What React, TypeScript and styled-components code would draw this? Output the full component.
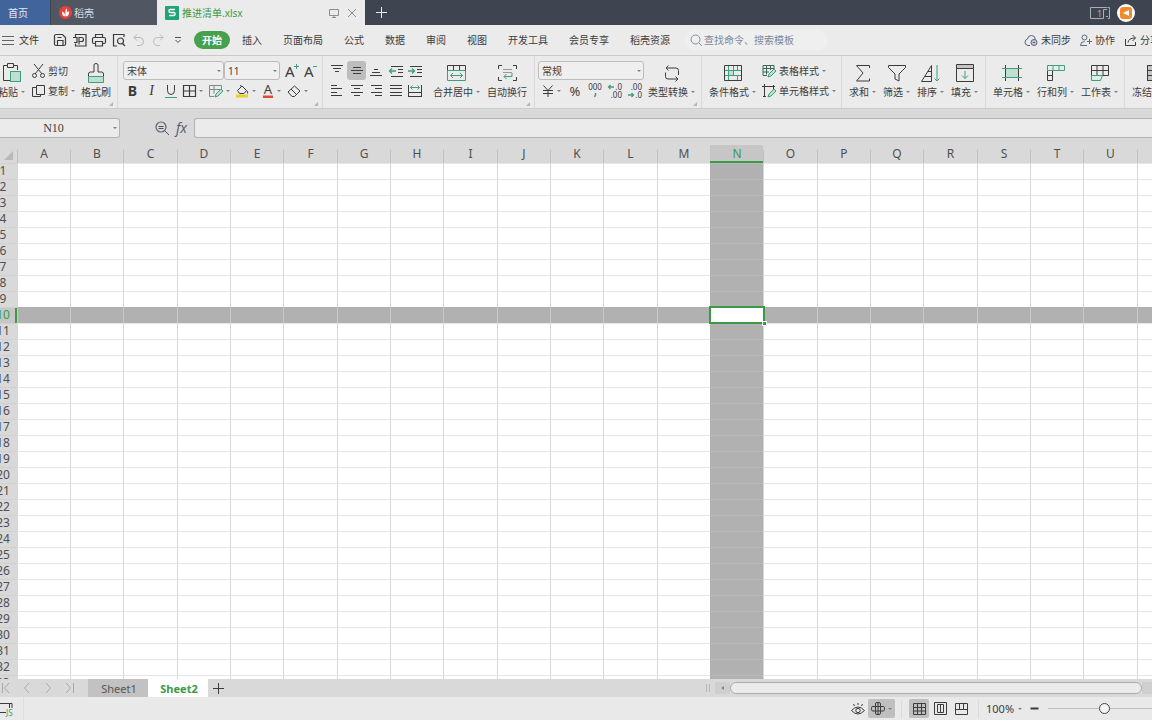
import React from 'react';
import styled, { createGlobalStyle, css } from 'styled-components';

const c = {
  ink: '#3c3c3c',
  green: '#3c9a47',
  teal: '#3f9f7c',
  mint: '#bfe0d1',
  panel: '#ebebeb',
  chrome: '#d9d9d9',
};

const GlobalStyle = createGlobalStyle`
  *, *::before, *::after { box-sizing: border-box; }
  html, body { margin: 0; }
  body, button, input, select {
    font-family: "Noto Sans", "Noto Sans CJK SC", sans-serif;
    font-size: 10px;
    line-height: 14px;
    color: ${c.ink};
  }
  button { border: 0; padding: 0; margin: 0; background: none; white-space: nowrap; }
`;

/* ---------- shared parts ---------- */

const Svg = styled.svg`
  display: block;
  flex: none;
  overflow: visible;
  fill: none;
  stroke: currentColor;
  stroke-width: 1;
  text {
    fill: currentColor;
    stroke: none;
  }
`;

type IcoProps = { w?: number; h?: number; children: React.ReactNode };
const Ico = ({ w = 14, h = 14, children }: IcoProps) => (
  <Svg width={w} height={h} viewBox={`0 0 ${w} ${h}`} aria-hidden="true">
    {children}
  </Svg>
);

const CaretMark = styled.span`
  flex: none;
  border: 2px solid transparent;
  border-top-color: #808080;
  border-bottom-width: 0;
`;

const Page = styled.div`
  display: flex;
  flex-direction: column;
  height: 100vh;
  overflow: hidden;
  background: ${c.chrome};
`;

/* ---------- title bar ---------- */

const TitleBar = styled.header`
  display: flex;
  flex: none;
  height: 25px;
  background: #3e4450;
  color: #e8eaee;
`;

const HomeTab = styled.button`
  width: 50px;
  padding-right: 14px;
  background: #42649c;
  color: #e6ecf5;
`;

const DocerTab = styled.button`
  display: flex;
  align-items: center;
  gap: 2px;
  width: 107px;
  padding-left: 8px;
  background: #515762;
  border-left: 1px solid #3e4450;
  color: #d9dbdf;
`;

const FileTab = styled.div`
  display: flex;
  align-items: center;
  gap: 9px;
  width: 208px;
  padding: 0 9px 0 8px;
  background: ${c.panel};
  color: #8c8c8c;
`;

const FileName = styled.button`
  display: flex;
  align-items: center;
  gap: 3px;
  margin-right: auto;
  color: ${c.green};
`;

const PlainIcon = styled.button`
  display: flex;
  align-items: center;
  justify-content: center;
  color: inherit;
`;

const NewTab = styled(PlainIcon)`
  width: 32px;
`;

const TitleRight = styled.div`
  display: flex;
  align-items: center;
  gap: 7px;
  margin-left: auto;
  padding-right: 17px;
  color: #a9adb6;
`;

/* ---------- menu bar ---------- */

const MenuBar = styled.nav`
  display: flex;
  flex: none;
  align-items: center;
  height: 31px;
  background: ${c.panel};
  border-bottom: 1px solid #c9c9c9;
  overflow: hidden;
`;

const FileMenu = styled.button`
  display: flex;
  align-items: center;
  gap: 5px;
  width: 53px;
  padding-left: 2px;
  color: #333333;
`;

const QuickBar = styled.div`
  display: flex;
  align-items: center;
  justify-content: space-between;
  width: 132px;
  margin-right: 9px;
`;

const StartTab = styled.button`
  height: 18px;
  padding: 0 8px;
  margin-right: 2px;
  border-radius: 9px;
  background: #46a04c;
  color: #ffffff;
  font-weight: 700;
`;

const MenuTabs = styled.div`
  display: flex;
  flex: none;
  gap: 1px;
`;

const MenuTab = styled.button`
  height: 18px;
  padding: 0 10px;
`;

const SearchBox = styled.label`
  display: flex;
  align-items: center;
  gap: 2px;
  width: 144px;
  height: 20px;
  margin-left: 4px;
  padding-left: 6px;
  border-radius: 10px;
  background: #efefef;
  color: #8490a3;
`;

const SearchInput = styled.input`
  width: 110px;
  padding: 0;
  border: 0;
  background: none;
  &::placeholder { color: #7b889d; opacity: 1; }
`;

const MenuRight = styled.div`
  display: flex;
  gap: 9px;
  margin-left: auto;
  margin-right: -8px;
`;

const MenuAction = styled.button`
  display: flex;
  align-items: center;
  gap: 3px;
`;

/* ---------- ribbon ---------- */

const Ribbon = styled.section`
  display: flex;
  flex: none;
  height: 53px;
  background: ${c.panel};
  border-bottom: 1px solid #cdcdcd;
  overflow: hidden;
`;

const Group = styled.div<{ $width: number; $pad: number; $launcher?: boolean }>`
  position: relative;
  display: flex;
  flex: none;
  align-items: flex-start;
  width: ${(p) => p.$width}px;
  padding: 5px 0 0 ${(p) => p.$pad}px;
  border-right: 1px solid #dadada;
  ${(p) =>
    p.$launcher &&
    css`
      &::after {
        content: '';
        position: absolute;
        right: 4px;
        bottom: 2px;
        border: 2px solid #b5b5b5;
        border-top-color: transparent;
        border-left-color: transparent;
      }
    `}
`;

const Stack = styled.div`
  display: flex;
  flex-direction: column;
  gap: 1px;
`;

const Line = styled.div`
  display: flex;
  align-items: center;
  height: 19px;
`;

const Big = styled.button`
  display: flex;
  flex: none;
  flex-direction: column;
  align-items: center;
`;

const BigArt = styled.span`
  display: flex;
  align-items: center;
  justify-content: center;
  height: 24px;
`;

const Caption = styled.span`
  display: flex;
  align-items: center;
  gap: 3px;
`;

const BigRow = styled.div`
  display: flex;
  gap: 7px;
`;

/* The paste button is partly scrolled off the left edge of the ribbon. */
const PasteSlot = styled.div`
  flex: none;
  width: 34px;
  margin-left: -2px;
  ${Big} { width: 27px; }
`;

const Small = styled.button`
  display: flex;
  align-items: center;
  gap: 3px;
`;

const Tool = styled.button<{ $width: number; $on?: boolean }>`
  display: flex;
  align-items: center;
  justify-content: center;
  gap: 3px;
  width: ${(p) => p.$width}px;
  height: 19px;
  border-radius: 3px;
  background: ${(p) => (p.$on ? '#bdbdbd' : 'none')};
`;

const Letter = styled.span<{ $kind?: 'bold' | 'italic' }>`
  font-size: 14px;
  font-weight: ${(p) => (p.$kind === 'bold' ? 700 : 400)};
  font-style: ${(p) => (p.$kind === 'italic' ? 'italic' : 'normal')};
  font-family: ${(p) => (p.$kind === 'italic' ? '"Liberation Serif", serif' : 'inherit')};
`;

const SelectWrap = styled.span<{ $width: number }>`
  position: relative;
  display: block;
  width: ${(p) => p.$width}px;
  height: 19px;
  ${CaretMark} {
    position: absolute;
    right: 3px;
    top: 9px;
  }
`;

const Picker = styled.select`
  appearance: none;
  width: 100%;
  height: 19px;
  padding: 0 3px;
  border: 1px solid #bcbcbc;
  border-radius: 3px;
  background: #efefef;
`;

type DropProps = { label: string; value: string; width: number };
const Drop = ({ label, value, width }: DropProps) => (
  <SelectWrap $width={width}>
    <Picker aria-label={label}>
      <option>{value}</option>
    </Picker>
    <CaretMark />
  </SelectWrap>
);

type BigProps = { text: string; caret?: boolean; children: React.ReactNode };
const BigButton = ({ text, caret = true, children }: BigProps) => (
  <Big type="button">
    <BigArt>{children}</BigArt>
    <Caption>
      {text}
      {caret && <CaretMark />}
    </Caption>
  </Big>
);

const Spacer = styled.span<{ $width: number }>`
  flex: none;
  width: ${(p) => p.$width}px;
`;

/* ---------- formula bar ---------- */

const FormulaBar = styled.div`
  display: flex;
  flex: none;
  align-items: center;
  height: 36px;
  padding-top: 2px;
`;

const NameBox = styled.div`
  position: relative;
  width: 120px;
  margin-right: 35px;
  ${CaretMark} {
    position: absolute;
    right: 3px;
    top: 9px;
  }
`;

const fieldLook = css`
  height: 20px;
  border: 1px solid #b3b3b3;
  background: #ebebeb;
`;

const NameInput = styled.input`
  ${fieldLook}
  display: block;
  width: 100%;
  padding: 0 12px 0 0;
  border-left: 0;
  border-radius: 0 3px 3px 0;
  font-family: "Liberation Serif", serif;
  font-size: 12px;
  text-align: center;
`;

const FormulaInput = styled.input`
  ${fieldLook}
  flex: 1;
  min-width: 0;
  border-right: 0;
  border-radius: 3px 0 0 3px;
`;

const FxButton = styled.button`
  width: 25px;
  font-family: "Open Sans", sans-serif;
  font-style: italic;
  font-size: 14px;
  color: #555a66;
`;

/* ---------- grid ---------- */

const GridArea = styled.main`
  flex: 1;
  min-height: 0;
  overflow: hidden;
  background: #ffffff;
`;

const Sheet = styled.table`
  table-layout: fixed;
  width: 0;
  margin-left: -11px;
  border-collapse: separate;
  border-spacing: 0;
  font-size: 12px;
  line-height: 14px;
`;

const Corner = styled.th`
  height: 18px;
  padding: 0 4px 3px 0;
  background: ${c.chrome};
  vertical-align: bottom;
  svg { margin-left: auto; }
`;

const ColHead = styled.th<{ $on: boolean }>`
  height: 18px;
  padding: 0 0 0 1px;
  font-weight: 400;
  text-align: center;
  color: ${(p) => (p.$on ? c.green : '#505050')};
  background: ${(p) =>
    p.$on ? '#c6c6c6' : 'linear-gradient(#c0c0c0, #c0c0c0) 0 5px / 1px 13px no-repeat #d9d9d9'};
  box-shadow: ${(p) => (p.$on ? `inset 0 -2px ${c.green}` : 'none')};
`;

const RowHead = styled.th<{ $on: boolean }>`
  height: 16px;
  padding: 0 0 1px;
  font-weight: 400;
  text-align: center;
  color: ${(p) => (p.$on ? c.green : '#505050')};
  background: ${(p) => (p.$on ? '#c6c6c6' : c.chrome)};
  border-top: 1px solid #d0d0d0;
  box-shadow: ${(p) => (p.$on ? `inset -2px 0 ${c.green}` : 'none')};
`;

const Cell = styled.td<{ $row: boolean; $col: boolean }>`
  position: relative;
  height: 16px;
  padding: 0;
  border-left: 1px solid ${(p) => (p.$row ? '#c9c9c9' : p.$col ? '#b1b1b1' : '#d6d6d6')};
  border-top: 1px solid ${(p) => (p.$row ? '#b1b1b1' : p.$col ? '#bababa' : '#e6e6e6')};
  background: ${(p) => (p.$row || p.$col ? '#b1b1b1' : '#ffffff')};
`;

const Selection = styled.div`
  position: absolute;
  z-index: 1;
  inset: -2px -2px -1px -2px;
  border: 2px solid ${c.green};
  background: #ffffff;
  &::after {
    content: '';
    position: absolute;
    right: -3px;
    bottom: -3px;
    width: 3px;
    height: 3px;
    background: ${c.green};
    outline: 1px solid #ffffff;
  }
`;

/* ---------- sheet tabs ---------- */

const TabStrip = styled.footer`
  display: flex;
  flex: none;
  height: 18px;
  background: ${c.chrome};
`;

const SheetNav = styled.div`
  display: flex;
  align-items: center;
  justify-content: space-between;
  width: 88px;
  padding-right: 13px;
  color: #a9a9a9;
`;

const SheetTab = styled.button<{ $on?: boolean }>`
  width: 60px;
  padding: 2px 0 0 2px;
  font-size: 11px;
  background: ${(p) => (p.$on ? '#ffffff' : '#c2c2c2')};
  color: ${(p) => (p.$on ? c.green : '#555555')};
  font-weight: ${(p) => (p.$on ? 700 : 400)};
`;

const AddSheet = styled(PlainIcon)`
  width: 20px;
`;

const ScrollBar = styled.div`
  display: flex;
  align-items: center;
  width: 448px;
  margin-left: auto;
`;

const Grip = styled.span`
  width: 4px;
  height: 8px;
  margin: 0 5px 0 2px;
  border: 1px solid #b9b9b9;
  border-width: 0 1px;
`;

const ScrollLeft = styled(PlainIcon)`
  width: 15px;
  height: 12px;
  background: #cfcfcf;
  color: #8a8a8a;
`;

const Thumb = styled.div`
  flex: 1;
  height: 12px;
  border: 1px solid #adadad;
  border-radius: 6px;
  background: #ebebeb;
`;

const TrackEnd = styled.span`
  width: 10px;
  height: 12px;
  background: #cfcfcf;
`;

/* ---------- status bar ---------- */

const StatusBar = styled.footer`
  display: flex;
  flex: none;
  align-items: center;
  height: 23px;
  background: #e9e9e9;
  overflow: hidden;
`;

const MacroButton = styled(PlainIcon)`
  justify-content: flex-start;
  width: 24px;
  height: 23px;
  border-right: 1px solid #dddddd;
`;

const StatusRight = styled.div`
  display: flex;
  flex: none;
  align-items: center;
  margin-left: auto;
  margin-right: -8px;
`;

const ViewButton = styled.button<{ $width: number; $on?: boolean }>`
  display: flex;
  align-items: center;
  justify-content: center;
  gap: 3px;
  width: ${(p) => p.$width}px;
  height: 19px;
  border-radius: 2px;
  background: ${(p) => (p.$on ? '#bfbfbf' : 'none')};
`;

const StatusRule = styled.i`
  width: 1px;
  height: 18px;
  margin: 0 7px 0 6px;
  background: #dadada;
`;

const ZoomButton = styled.button`
  display: flex;
  align-items: center;
  gap: 4px;
  width: 44px;
  font-size: 11px;
`;

const ZoomSlider = styled.input`
  appearance: none;
  width: 112px;
  height: 12px;
  margin: 0 0 0 9px;
  background: linear-gradient(#bdbdbd, #bdbdbd) center / 100% 1px no-repeat;
  &::-webkit-slider-thumb {
    appearance: none;
    width: 11px;
    height: 11px;
    border: 1px solid #444444;
    border-radius: 50%;
    background: #f4f4f4;
  }
`;

/* ---------- drawings ---------- */

const alignRows: Record<string, number[][]> = {
  top: [[1, 2, 13], [3, 5, 11], [5, 8, 9]],
  middle: [[3, 4, 11], [1, 7, 13], [3, 10, 11]],
  bottom: [[5, 6, 9], [3, 9, 11], [1, 12, 13]],
  left: [[1, 2, 7], [1, 5, 12], [1, 9, 7], [1, 12, 12]],
  center: [[1, 2, 13], [4, 5, 10], [1, 9, 13], [4, 12, 10]],
  right: [[2, 2, 13], [6, 5, 13], [2, 9, 13], [6, 12, 13]],
  justify: [[1, 2, 13], [1, 5, 13], [1, 9, 13], [1, 12, 13]],
};

const AlignIcon = ({ kind }: { kind: string }) => (
  <Ico>
    {alignRows[kind].map(([a, y, b], i) => (
      <path key={i} d={`M${a} ${y - 0.5}H${b}`} />
    ))}
  </Ico>
);

const IndentIcon = ({ flip }: { flip?: boolean }) => (
  <Ico>
    <path d="M2 2.5h12M9 5.5h5M9 8.5h5M2 12.500h12" />
    <path
      stroke={c.teal}
      strokeWidth="1.300"
      d={flip ? 'M0 7h6.500M4 4.500l2.500 2.500l-2.500 2.500' : 'M7 7H.5M3 4.500L.5 7l2.500 2.500'}
    />
  </Ico>
);

const DecimalIcon = ({ more }: { more?: boolean }) => (
  <Ico w={14} h={16}>
    <text x="14" y="7" fontSize="8" textAnchor="end">{more ? '.0' : '.00'}</text>
    <text x="14" y="15" fontSize="8" textAnchor="end">{more ? '.00' : '.0'}</text>
    <path
      stroke={c.teal}
      strokeWidth="1.300"
      d={more ? 'M6 4H.5m2-2l-2 2l2 2' : 'M0 12h5.500m-2-2l2 2l-2 2'}
    />
  </Ico>
);

/* ---------- data ---------- */

const menuTabs = ['插入', '页面布局', '公式', '数据', '审阅', '视图', '开发工具', '会员专享', '稻壳资源'];
const columns = 'ABCDEFGHIJKLMNOPQRSTUVWXYZ'.split('');
const rows = Array.from({ length: 40 }, (_, i) => i + 1);
const activeCol = 'N';
const activeRow = 10;

export default function App() {
  return (
    <Page>
      <GlobalStyle />

      <TitleBar>
        <HomeTab type="button">首页</HomeTab>
        <DocerTab type="button">
          <Ico w={13} h={13}>
            <circle cx="6.500" cy="6.500" r="6.500" fill="#e8413c" stroke="none" />
            <path d="M6.300 10.500C3.500 10.300 2.600 8 3.400 5.500c1.800.8 2.800 2.500 2.900 5zM6.800 10.500C6 7 6 5 7.300 2.200c1 1.800.8 3.400.3 4.800.7-1 1.500-1.600 2.500-1.700.3 2.600-.6 4.900-3.300 5.200z" fill="#ffffff" stroke="none" />
          </Ico>
          稻壳
        </DocerTab>
        <FileTab>
          <FileName type="button">
            <Ico w={14} h={14}>
              <rect x="0" y="0" width="14" height="14" rx="1" fill="#1fa377" stroke="none" />
              <path d="M10 3.500H5q-1 0-1 1v1q0 1 1 1h4q1 0 1 1v1q0 1-1 1H4" stroke="#ffffff" strokeWidth="1.300" />
            </Ico>
            推进清单.xlsx
          </FileName>
          <PlainIcon type="button" aria-label="投屏">
            <Ico w={10} h={10}>
              <path d="M.5 1.500h9v6h-9zM5 7.500V10M3 9.500h4" />
            </Ico>
          </PlainIcon>
          <PlainIcon type="button" aria-label="关闭">
            <Ico w={8} h={8}>
              <path d="M0 0l8 8M8 0L0 8" />
            </Ico>
          </PlainIcon>
        </FileTab>
        <NewTab type="button" aria-label="新建">
          <Ico w={11} h={11}>
            <path d="M5.500 0v11M0 5.500h11" />
          </Ico>
        </NewTab>
        <TitleRight>
          <PlainIcon type="button" aria-label="窗口">
            <Ico w={20} h={12}>
              <path d="M17 .5H.5v11h13M18 11.500h1.500v-9M17.500.5h2v2" />
              <text x="7" y="10" fontSize="9">1</text>
              <path d="M17 2.500h-3.500v9M16 9.500h2" />
            </Ico>
          </PlainIcon>
          <PlainIcon type="button" aria-label="账号">
            <Ico w={18} h={18}>
              <circle cx="9" cy="9" r="9" fill="#ffffff" stroke="none" />
              <rect x="3" y="3" width="12" height="12" rx="3" fill="#f08a2c" stroke="none" />
              <path d="M12 6v6L6 9z" fill="#ffffff" stroke="none" />
            </Ico>
          </PlainIcon>
        </TitleRight>
      </TitleBar>

      <MenuBar>
        <FileMenu type="button">
          <Ico w={12} h={9}>
            <path d="M0 .5h12M0 4.500h12M0 8.500h12" stroke="#666666" />
          </Ico>
          文件
        </FileMenu>
        <QuickBar>
          <PlainIcon type="button" aria-label="保存">
            <Ico>
              <path d="M1.500 3Q1.500 1.500 3 1.500h6.500l3 3V11q0 1.500-1.500 1.500h-8Q1.500 12.500 1.500 11zM4.500 12.500v-5h5.500v5M4.500 4.500h4" strokeWidth="1.200" />
            </Ico>
          </PlainIcon>
          <PlainIcon type="button" aria-label="输出为PDF">
            <Ico>
              <path d="M2.500 4V1.500h10.500v11.500h-10.500V10.500M0 4.500h4v5H1M6 11.500v-7h2.500q2 0 2 2t-2 2H6M4 9.500V7" strokeWidth="1.200" />
            </Ico>
          </PlainIcon>
          <PlainIcon type="button" aria-label="打印">
            <Ico>
              <path d="M3.500 4.500V1.500h7V4.500M3 10.500H2q-1.500 0-1.500-1.500v-3q0-1.500 1.500-1.500h10q1.500 0 1.500 1.500v3q0 1.500-1.500 1.500H11M3.500 8.500h7v4.500h-7z" strokeWidth="1.200" />
            </Ico>
          </PlainIcon>
          <PlainIcon type="button" aria-label="打印预览">
            <Ico>
              <path d="M5 13H1.500v-11.500h10.500V4" strokeWidth="1.200" />
              <circle cx="8.500" cy="8" r="3" strokeWidth="1.200" />
              <path d="M10.500 10.500l2.500 2.500" strokeWidth="1.200" />
            </Ico>
          </PlainIcon>
          <PlainIcon type="button" aria-label="撤销">
            <Ico>
              <path stroke="#b5b5b5" d="M5 1.500l-3 3l3 3M2 4.500h6q3.500.5 3.500 4T8 12.500H5" />
            </Ico>
          </PlainIcon>
          <PlainIcon type="button" aria-label="恢复">
            <Ico>
              <path stroke="#bdbdbd" d="M9 1.500l3 3l-3 3M12 4.500H6q-3.500.5-3.500 4T6 12.500h3" />
            </Ico>
          </PlainIcon>
          <PlainIcon type="button" aria-label="更多">
            <Ico>
              <path d="M4 4.500h6M4.500 7L7 9.500L9.500 7" stroke="#555555" />
            </Ico>
          </PlainIcon>
        </QuickBar>
        <StartTab type="button">开始</StartTab>
        <MenuTabs>
          {menuTabs.map((t) => (
            <MenuTab type="button" key={t}>
              {t}
            </MenuTab>
          ))}
        </MenuTabs>
        <SearchBox>
          <Ico w={12} h={12}>
            <circle cx="5.500" cy="5.500" r="4.500" />
            <path d="M9 9l3 3" />
          </Ico>
          <SearchInput aria-label="查找命令" placeholder="查找命令、搜索模板" />
        </SearchBox>
        <MenuRight>
          <MenuAction type="button">
            <Ico w={14} h={12}>
              <path d="M6 11.500H4Q1 11 1 8.300T3.500 5Q4 1.500 7.500 1.500T11.500 5.500" stroke="#56607a" />
              <circle cx="10" cy="8.500" r="3" stroke="#56607a" fill="#c3c9d8" />
              <path d="M8.800 8.500h2.400" stroke="#56607a" />
            </Ico>
            未同步
          </MenuAction>
          <MenuAction type="button">
            <Ico w={12} h={12}>
              <circle cx="4.500" cy="3.500" r="2.500" stroke="#5f6a80" />
              <path d="M.5 11.500Q.5 7.500 4.500 7.500M.5 11.500H7M9.500 5v5M7 7.500h5" stroke="#5f6a80" />
            </Ico>
            协作
          </MenuAction>
          <MenuAction type="button">
            <Ico w={13} h={12}>
              <path d="M1.500 5v6.500h10V8M4 8.500Q4.500 4 11 4M8.500 1L11.500 4L8.500 7" />
            </Ico>
            分享
          </MenuAction>
        </MenuRight>
      </MenuBar>

      <Ribbon>
        <Group $width={118} $pad={0} $launcher>
          <PasteSlot>
            <BigButton text="粘贴">
              <Ico w={18} h={20}>
                <path d="M5 2.500H.5v15H7M10 2.500h4.500V7M4.500.5h6v4h-6z" />
                <rect x="7.500" y="8.500" width="10" height="10" fill={c.mint} stroke={c.teal} />
              </Ico>
            </BigButton>
          </PasteSlot>
          <Stack>
            <Line>
              <Small type="button">
                <Ico w={13} h={14}>
                  <path d="M2 0l8 10M11 0L3 10" />
                  <circle cx="2.500" cy="11.500" r="2" />
                  <circle cx="10.500" cy="11.500" r="2" />
                </Ico>
                剪切
              </Small>
            </Line>
            <Line>
              <Small type="button">
                <Ico w={13} h={14}>
                  <path d="M4.500 1.500h8v9h-8zM4.500 3.500h-4v9h8v-2" />
                </Ico>
                复制
                <CaretMark />
              </Small>
            </Line>
          </Stack>
          <Spacer $width={6} />
          <BigButton text="格式刷" caret={false}>
            <Ico w={16} h={20}>
              <path d="M6 9V2q0-1.500 2-1.500T10 2v7h3.500q2 0 2 2v2.500H.5V11q0-2 2-2z" />
              <path d="M.5 13.500h15v6H.5z" fill={c.mint} stroke={c.teal} />
            </Ico>
          </BigButton>
        </Group>

        <Group $width={205} $pad={5} $launcher>
          <Stack>
            <Line>
              <Drop label="字体" value="宋体" width={101} />
              <Drop label="字号" value="11" width={56} />
              <Spacer $width={2} />
              <Tool $width={19} type="button" aria-label="增大字号">
                <Ico>
                  <text x="0" y="13" fontSize="15">A</text>
                  <path d="M11.500 0v5M9 2.500h5" stroke={c.teal} />
                </Ico>
              </Tool>
              <Tool $width={19} type="button" aria-label="减小字号">
                <Ico>
                  <text x="0" y="13" fontSize="15">A</text>
                  <path d="M9 2.500h4" stroke={c.teal} />
                </Ico>
              </Tool>
            </Line>
            <Line>
              <Tool $width={19} type="button" aria-label="加粗">
                <Letter $kind="bold">B</Letter>
              </Tool>
              <Tool $width={19} type="button" aria-label="倾斜">
                <Letter $kind="italic">I</Letter>
              </Tool>
              <Tool $width={19} type="button" aria-label="下划线">
                <Ico w={12} h={14}>
                  <path d="M2.500 1v5.500q0 4 3.500 4t3.500-4V1" />
                  <path d="M0 13.500h12" stroke={c.teal} />
                </Ico>
              </Tool>
              <Tool $width={26} type="button" aria-label="边框">
                <Ico w={13}>
                  <path d="M.5 1.500h12v11H.5zM6.500 1.500v11M.5 7h12" strokeWidth="1.200" />
                </Ico>
                <CaretMark />
              </Tool>
              <Tool $width={26} type="button" aria-label="单元格样式">
                <Ico w={14}>
                  <path d="M5 12.500H.5v-11h12V5M.5 5.500H12M5 1.500v8" stroke="#7f8a86" />
                  <path d="M6 13l1-3l5-5l2 2l-5 5z" fill={c.mint} stroke={c.teal} />
                </Ico>
                <CaretMark />
              </Tool>
              <Tool $width={26} type="button" aria-label="填充颜色">
                <Ico w={14}>
                  <path d="M2.500 6.500L7 2l4.500 4.500L9 9.500H4.500zM5 1.500l2 1M11.500 6.500q2 1.500 1 3" />
                  <path d="M1 10.500h12v3H1z" fill="#e6d320" stroke="none" />
                </Ico>
                <CaretMark />
              </Tool>
              <Tool $width={26} type="button" aria-label="字体颜色">
                <Ico w={12}>
                  <text x="6" y="10" fontSize="13" textAnchor="middle">A</text>
                  <path d="M1 11.500h10v2.500H1z" fill="#e04a33" stroke="none" />
                </Ico>
                <CaretMark />
              </Tool>
              <Tool $width={26} type="button" aria-label="清除">
                <Ico w={14}>
                  <path d="M1 8l6.500-6l5.500 5l-5.500 5.500H5zM4 5l5.500 5.500" />
                </Ico>
                <CaretMark />
              </Tool>
            </Line>
          </Stack>
        </Group>

        <Group $width={212} $pad={4} $launcher>
          <Stack>
            <Line>
              <Tool $width={20} type="button" aria-label="顶端对齐"><AlignIcon kind="top" /></Tool>
              <Tool $width={19} $on type="button" aria-label="垂直居中"><AlignIcon kind="middle" /></Tool>
              <Tool $width={20} type="button" aria-label="底端对齐"><AlignIcon kind="bottom" /></Tool>
              <Tool $width={19} type="button" aria-label="减少缩进"><IndentIcon /></Tool>
              <Tool $width={20} type="button" aria-label="增加缩进"><IndentIcon flip /></Tool>
            </Line>
            <Line>
              <Tool $width={20} type="button" aria-label="左对齐"><AlignIcon kind="left" /></Tool>
              <Tool $width={19} type="button" aria-label="水平居中"><AlignIcon kind="center" /></Tool>
              <Tool $width={20} type="button" aria-label="右对齐"><AlignIcon kind="right" /></Tool>
              <Tool $width={19} type="button" aria-label="两端对齐"><AlignIcon kind="justify" /></Tool>
              <Tool $width={20} type="button" aria-label="分散对齐">
                <Ico>
                  <path d="M.5 1v12M13.500 1v12M1 8.500h12M1 12.500h12" />
                  <path d="M2.500 3.500h9M4.500 1.500l-2 2l2 2M9.500 1.500l2 2l-2 2" stroke={c.teal} />
                </Ico>
              </Tool>
            </Line>
          </Stack>
          <Spacer $width={8} />
          <BigButton text="合并居中">
            <Ico w={19} h={16}>
              <path d="M.5 6V.5h18V6M6.500.5v5M12.500.5v5M.5 5.500h18" />
              <path d="M.5 5.500h18v10H.5z" stroke={c.teal} />
              <path d="M3.500 10.500h12M6 8l-2.500 2.500L6 13M13 8l2.500 2.500L13 13" stroke={c.teal} />
            </Ico>
          </BigButton>
          <Spacer $width={7} />
          <BigButton text="自动换行" caret={false}>
            <Ico w={19} h={16}>
              <path d="M4 .5H.5V4M15 .5h3.500V4M4 15.500H.5V12M15 15.500h3.500V12" />
              <path d="M5 4.500h9M5 7.500h9" stroke="#999999" />
              <path d="M14 8v3.500H6M8.500 9L6 11.500L8.500 14" stroke={c.teal} />
            </Ico>
          </BigButton>
        </Group>

        <Group $width={167} $pad={3} $launcher>
          <Stack>
            <Line>
              <Drop label="数字格式" value="常规" width={106} />
            </Line>
            <Line>
              <Tool $width={27} type="button" aria-label="货币">
                <Ico w={12}>
                  <path d="M1.500 1.500L6 6.500L10.500 1.500M1 6.500h10M1 9.500h10M6 6.500V13" />
                </Ico>
                <CaretMark />
              </Tool>
              <Tool $width={20} type="button" aria-label="百分比">
                <Ico w={12}>
                  <text x="6" y="12" fontSize="13" textAnchor="middle">%</text>
                </Ico>
              </Tool>
              <Tool $width={20} type="button" aria-label="千位分隔">
                <Ico w={15} h={15}>
                  <text x="7" y="7" fontSize="8" textAnchor="middle">000</text>
                  <path d="M7.500 10v2l-1 2" stroke={c.teal} strokeWidth="1.500" />
                </Ico>
              </Tool>
              <Tool $width={20} type="button" aria-label="增加小数位"><DecimalIcon more /></Tool>
              <Tool $width={19} type="button" aria-label="减少小数位"><DecimalIcon /></Tool>
            </Line>
          </Stack>
          <Spacer $width={4} />
          <BigButton text="类型转换">
            <Ico w={16} h={17}>
              <path d="M4.500.5L2 3l2.500 2.500M2 3H12q2.500 0 2.500 2.500V10M11.500 11.500L14 14l-2.500 2.500M14 14H4q-2.500 0-2.500-2.500V7.500" />
            </Ico>
          </BigButton>
        </Group>

        <Group $width={140} $pad={7}>
          <BigButton text="条件格式">
            <Ico w={18} h={16}>
              <path d="M4.500 5.500h5v5h-5z" fill={c.mint} stroke="none" />
              <path d="M4.500.5v15M4.500 5.500h5M9.500 5.500h8M4.500 10.500h13M9.500.5v10M13.500 10.500v5M13.500.5v5M.5 5.500h4M.5 10.500h4" stroke={c.teal} />
              <path d="M.5.5h17v15H.5z" />
            </Ico>
          </BigButton>
          <Spacer $width={6} />
          <Stack>
            <Line>
              <Small type="button">
                <Ico>
                  <path d="M5 11.500H1v-10h11V5M1 4.500h11M1 8h6M4.500 1.500v9M8.500 1.500V6" stroke="#3c6656" />
                  <path d="M6 13l1-3l5-5l2 2l-5 5z" fill={c.mint} stroke={c.teal} />
                </Ico>
                表格样式
                <CaretMark />
              </Small>
            </Line>
            <Line>
              <Small type="button">
                <Ico>
                  <path d="M2.500 0v13M0 2.500h13M1 12.500h3M11.500 1v4" />
                  <path d="M6 13l1-3l5-5l2 2l-5 5z" fill={c.mint} stroke={c.teal} />
                </Ico>
                单元格样式
                <CaretMark />
              </Small>
            </Line>
          </Stack>
        </Group>

        <Group $width={144} $pad={7}>
          <BigRow>
            <BigButton text="求和">
              <Ico w={16} h={17}>
                <path d="M14.500 3V.5H1.500L8 8L1.500 16h13v-2.500" />
              </Ico>
            </BigButton>
            <BigButton text="筛选">
              <Ico w={18} h={17}>
                <path d="M.5.5h17v2L11 9v7l-4-2V9L.5 2.500z" />
              </Ico>
            </BigButton>
            <BigButton text="排序">
              <Ico w={19} h={17}>
                <path d="M.5 16.500L10.500.5v16zM4 11.500h6.500M7 6.500h3.500" />
                <path d="M16 0v16M13.500 13.500L16 16l2.500-2.500" stroke={c.teal} />
              </Ico>
            </BigButton>
            <BigButton text="填充">
              <Ico w={18} h={18}>
                <path d="M.5.5h17v4H.5z" fill="#c4c4c4" />
                <path d="M.5 4.500h17v13H.5z" />
                <path d="M9 7v7.500M6 11.500L9 14.500L12 11.500" stroke={c.teal} />
              </Ico>
            </BigButton>
          </BigRow>
        </Group>

        <Group $width={139} $pad={7}>
          <BigRow>
            <BigButton text="单元格">
              <Ico w={20} h={16}>
                <path d="M3.500 3.500h13v9h-13z" fill={c.mint} stroke="none" />
                <path d="M3.500 0v16M16.500 0v16" />
                <path d="M0 3.500h20M0 12.500h20" stroke={c.teal} />
              </Ico>
            </BigButton>
            <BigButton text="行和列">
              <Ico w={18} h={16}>
                <path d="M.5 5.500v10h5v-10M.5 10.500h5" />
                <path d="M.5.5h17v5H.5zM6 .5v5M12 .5v5" stroke={c.teal} />
              </Ico>
            </BigButton>
            <BigButton text="工作表">
              <Ico w={18} h={16}>
                <path d="M.5 11V.5h17v10H12M.5 5.500h17M6 .5v10M12 .5v10M.5 10.500h12" />
                <path d="M.5 10.500h11l-2 5H.5z" stroke={c.teal} fill="#dcefe6" />
              </Ico>
            </BigButton>
          </BigRow>
        </Group>

        <Group $width={64} $pad={7}>
          <BigButton text="冻结窗格">
            <Ico w={18} h={16}>
              <path d="M.5.5h6v15h-6z" fill="#c4c4c4" />
              <path d="M.5.5h17v15H.5zM.5 5.500h17M.5 10.500h17M6.500.5v15" />
            </Ico>
          </BigButton>
        </Group>
      </Ribbon>

      <FormulaBar>
        <NameBox>
          <NameInput aria-label="名称框" defaultValue="N10" />
          <CaretMark />
        </NameBox>
        <PlainIcon type="button" aria-label="浏览公式结果">
          <Ico>
            <circle cx="6" cy="6" r="5" stroke="#5d6478" strokeWidth="1.200" />
            <path d="M10 10l4 4M3.500 5.500h5M3.500 7.500h5" stroke="#4a5064" />
          </Ico>
        </PlainIcon>
        <FxButton type="button">fx</FxButton>
        <FormulaInput aria-label="编辑栏" />
      </FormulaBar>

      <GridArea>
        <Sheet>
          <colgroup>
            <col style={{ width: 28 }} />
            {columns.map((name, i) => (
              <col key={name} style={{ width: i % 3 === 2 ? 54 : 53 }} />
            ))}
          </colgroup>
          <thead>
            <tr>
              <Corner>
                <Ico w={9} h={9}>
                  <path d="M9 0v9H0z" fill="#b9b9b9" stroke="none" />
                </Ico>
              </Corner>
              {columns.map((name) => (
                <ColHead key={name} $on={name === activeCol} scope="col">
                  {name}
                </ColHead>
              ))}
            </tr>
          </thead>
          <tbody>
            {rows.map((n) => (
              <tr key={n}>
                <RowHead $on={n === activeRow} scope="row">
                  {n}
                </RowHead>
                {columns.map((name) => (
                  <Cell key={name} $row={n === activeRow} $col={name === activeCol}>
                    {n === activeRow && name === activeCol && <Selection />}
                  </Cell>
                ))}
              </tr>
            ))}
          </tbody>
        </Sheet>
      </GridArea>

      <TabStrip>
        <SheetNav>
          <PlainIcon type="button" aria-label="第一张">
            <Ico w={10} h={10}><path d="M2.500 0v10M9 0L4.500 5L9 10" /></Ico>
          </PlainIcon>
          <PlainIcon type="button" aria-label="上一张">
            <Ico w={10} h={10}><path d="M7 0L2.500 5L7 10" /></Ico>
          </PlainIcon>
          <PlainIcon type="button" aria-label="下一张">
            <Ico w={10} h={10}><path d="M3 0l4.500 5L3 10" /></Ico>
          </PlainIcon>
          <PlainIcon type="button" aria-label="最后一张">
            <Ico w={10} h={10}><path d="M1 0l4.500 5L1 10M8.500 0v10" /></Ico>
          </PlainIcon>
        </SheetNav>
        <SheetTab type="button">Sheet1</SheetTab>
        <SheetTab type="button" $on>
          Sheet2
        </SheetTab>
        <AddSheet type="button" aria-label="新建工作表">
          <Ico w={11} h={11}><path d="M5.500 0v11M0 5.500h11" /></Ico>
        </AddSheet>
        <ScrollBar>
          <Grip />
          <ScrollLeft type="button" aria-label="向左滚动">
            <Ico w={4} h={4}><path d="M3 0v4L0 2z" fill="currentColor" stroke="none" /></Ico>
          </ScrollLeft>
          <Thumb />
          <TrackEnd />
        </ScrollBar>
      </TabStrip>

      <StatusBar>
        <MacroButton type="button" aria-label="宏">
          <Ico w={14} h={14}>
            <path d="M0 1.500h12V6M0 10.500h6M9.500 2v4" />
            <text x="6" y="14" fontSize="8" style={{ fill: c.teal }}>JS</text>
          </Ico>
        </MacroButton>
        <StatusRight>
          <ViewButton $width={20} type="button" aria-label="护眼模式">
            <Ico w={14} h={14}>
              <path d="M.5 8.500Q7 1.500 13.500 8.500Q7 15.500.5 8.500zM7 1v2M2.500 2l1 2M11.500 2l-1 2" />
              <circle cx="7" cy="8.500" r="2.200" />
            </Ico>
          </ViewButton>
          <ViewButton $width={27} $on type="button" aria-label="阅读模式">
            <Ico w={14} h={13}>
              <path d="M4.500 2q0-1.500 1.500-1.500h2q1.500 0 1.500 1.500v9q0 1.500-1.500 1.500H6q-1.500 0-1.500-1.500zM2 4.500h10q1.500 0 1.500 1v2q0 1.500-1.500 1.500H2Q.5 9 .5 7.500v-2q0-1 1.500-1zM7 1v12" />
            </Ico>
            <CaretMark />
          </ViewButton>
          <StatusRule />
          <ViewButton $width={20} $on type="button" aria-label="普通视图">
            <Ico w={13} h={12}>
              <path d="M.5.5h12v11H.5zM.5 4.500h12M.5 8h12M4.500.5v11M8.500.5v11" />
            </Ico>
          </ViewButton>
          <ViewButton $width={22} type="button" aria-label="页面布局">
            <Ico w={13} h={13}>
              <path d="M.5.5h12v12H.5zM3.500 2.500h6v8h-6zM6.500 2.500v8" />
            </Ico>
          </ViewButton>
          <ViewButton $width={21} type="button" aria-label="分页预览">
            <Ico w={13} h={12}>
              <path d="M.5.5h12v11H.5zM.5 6.500h8v-6M4.500.5v6M8.500 6.500h4" />
            </Ico>
          </ViewButton>
          <StatusRule />
          <ZoomButton type="button">
            100%
            <CaretMark />
          </ZoomButton>
          <PlainIcon type="button" aria-label="缩小">
            <Ico w={9} h={9}><path d="M.5 4.500h8" strokeWidth="2" /></Ico>
          </PlainIcon>
          <ZoomSlider type="range" aria-label="缩放" min={0} max={100} defaultValue={50} />
        </StatusRight>
      </StatusBar>
    </Page>
  );
}
